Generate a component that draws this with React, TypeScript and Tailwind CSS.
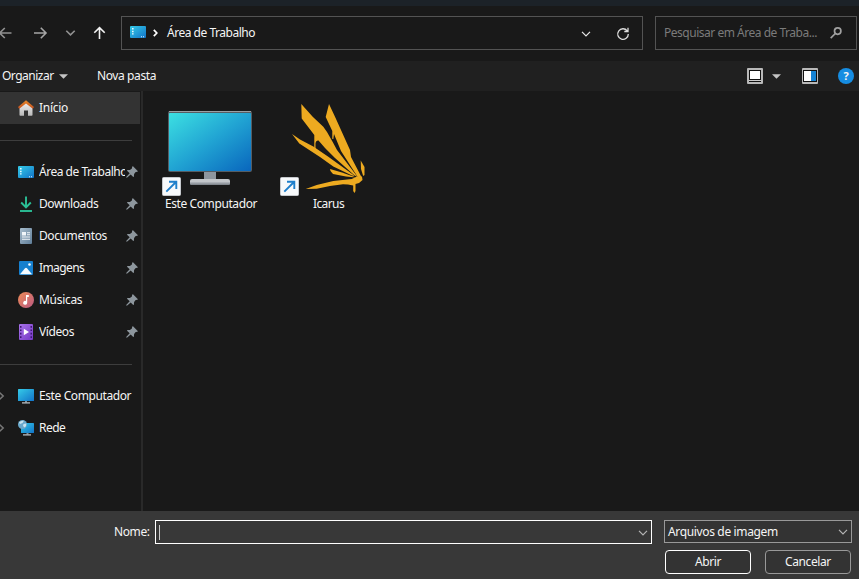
import React from "react";

type SvgProps = { className?: string };

function DesktopIcon({ className = "" }: SvgProps) {
  return (
    <svg width="16" height="16" viewBox="0 0 16 16" className={className}>
      <defs>
        <linearGradient id="desk" x1="0" y1="0" x2="1" y2="1">
          <stop offset="0" stopColor="#35cbe8" />
          <stop offset="1" stopColor="#1273c8" />
        </linearGradient>
      </defs>
      <rect x="0" y="2" width="16" height="12" rx="1" fill="url(#desk)" />
      <path d="M2 4h1.6v1.5H2zM2 6.7h1.6v1.5H2zM2 9.2h1.6v1.4H2z" fill="#e8fbff" />
      <path d="M11 12.3h1v1h-1zM13 12.3h1v1h-1z" fill="#d8f0ff" />
    </svg>
  );
}

function HomeIcon() {
  return (
    <svg width="16" height="16" viewBox="0 0 16 16">
      <defs>
        <linearGradient id="wall" x1="0" y1="0" x2="0" y2="1">
          <stop offset="0" stopColor="#f2f2f2" />
          <stop offset="1" stopColor="#b9b9b9" />
        </linearGradient>
        <linearGradient id="roof" x1="0" y1="0" x2="0" y2="1">
          <stop offset="0" stopColor="#e98a2c" />
          <stop offset="1" stopColor="#c3501f" />
        </linearGradient>
      </defs>
      <path d="M1.500 7 8 2l6.500 5v8q0 .8-.8.800H10V10.500H6v5.300H2.300q-.8 0-.8-.8z" fill="url(#wall)" />
      <path d="M8 .2 16 6.900 14.800 8.700 8 3.400 1.200 8.700 0 6.900z" fill="url(#roof)" />
    </svg>
  );
}

function DownloadIcon() {
  return (
    <svg width="16" height="16" viewBox="0 0 16 16" fill="none" stroke="#2bbf96" strokeWidth="1.900">
      <path d="M8 .5v11M3.200 6.500 8 11.300l4.800-4.800" />
      <path d="M2 15h12" strokeWidth="1.900" />
    </svg>
  );
}

function DocumentIcon() {
  return (
    <svg width="16" height="16" viewBox="0 0 16 16">
      <defs>
        <linearGradient id="doc" x1="0" y1="0" x2="1" y2="1">
          <stop offset="0" stopColor="#a8bdcd" />
          <stop offset="1" stopColor="#5f7d98" />
        </linearGradient>
      </defs>
      <rect x="2" y="0" width="12" height="16" rx="1" fill="url(#doc)" />
      <path d="M4 4h4v3.500H4zM9 4.200h3v1H9zM9 6.300h3v1H9zM4 8.600h8v1H4zM4 10.700h8v1H4z" fill="#f1f6fa" />
    </svg>
  );
}

function ImageIcon() {
  return (
    <svg width="16" height="16" viewBox="0 0 16 16">
      <rect x="1" y="1" width="14" height="14" rx="1" fill="#1680cf" />
      <path d="M2 14.300 7 8.200q1-1 2 0l5 6.100z" fill="#f5fbff" />
      <circle cx="11.500" cy="4.500" r="1.300" fill="#f5fbff" />
    </svg>
  );
}

function MusicIcon() {
  return (
    <svg width="16" height="16" viewBox="0 0 16 16">
      <defs>
        <linearGradient id="music" x1="0" y1="0" x2="1" y2="1">
          <stop offset="0" stopColor="#ef8c56" />
          <stop offset="1" stopColor="#b95882" />
        </linearGradient>
      </defs>
      <circle cx="8" cy="8" r="8" fill="url(#music)" />
      <path d="M8 3h2.800v1.900H9.200v5.800a2 2 0 1 1-1.200-1.800z" fill="#fff" />
    </svg>
  );
}

function VideoIcon() {
  return (
    <svg width="16" height="16" viewBox="0 0 16 16">
      <defs>
        <linearGradient id="vid" x1="0" y1="0" x2="1" y2="1">
          <stop offset="0" stopColor="#a873ea" />
          <stop offset="1" stopColor="#7538c4" />
        </linearGradient>
      </defs>
      <rect x="1" y="0" width="14" height="16" rx="1" fill="url(#vid)" />
      <path
        d="M2 2h1.500v1.700H2zM2 5.400h1.500v1.700H2zM2 8.800h1.500v1.700H2zM2 12.200h1.500v1.700H2zM12.500 2H14v1.700h-1.500zM12.500 5.400H14v1.700h-1.500zM12.500 8.800H14v1.700h-1.500zM12.500 12.200H14v1.700h-1.500z"
        fill="#3e1772"
      />
      <path d="M5.800 4.700v6.600L11 8z" fill="#fff" />
    </svg>
  );
}

function MonitorIcon() {
  return (
    <svg width="16" height="16" viewBox="0 0 16 16">
      <rect x="0" y="1" width="16" height="12" rx=".6" fill="url(#desk)" />
      <path d="M7 13h2v1.500H7z" fill="#7f909c" />
      <path d="M4 14.300h8v1.200H4z" fill="#c4ccd2" />
    </svg>
  );
}

function NetworkIcon() {
  return (
    <svg width="16" height="16" viewBox="0 0 16 16">
      <rect x="3" y="3" width="13" height="10" rx=".6" fill="url(#desk)" />
      <path d="M8.500 13h2v1.500h-2z" fill="#7f909c" />
      <path d="M5 14.300h8v1.200H5z" fill="#c4ccd2" />
      <circle cx="4.500" cy="4.500" r="4.500" fill="#6aa9cc" />
      <path d="M1 2.500Q3 .2 6 .8L4.500 3 2 4zM5.500 4l2.800-.5q.3 2.500-1.600 4L5 6z" fill="#c9e4ef" />
    </svg>
  );
}

function PinIcon() {
  return (
    <svg width="12" height="12" viewBox="0 0 12 12" fill="#8d969d">
      <path d="M7 .3 11.700 5q.3.600-.3.800l-1.700.3-1.600 2-.2 2.400q-.3.700-.9.200L4.700 8.400 1.200 11.600.3 11.800.4 10.800 3.700 7.300 1.300 5q-.5-.7.100-.9l2.500-.2L5.900 2.400 6.200.7q.2-.7.800-.4z" />
    </svg>
  );
}

function ChevronDown({ className = "", color = "#e8e8e8", w = 10 }: SvgProps & { color?: string; w?: number }) {
  return (
    <svg width={w} height="6" viewBox="0 0 10 6" fill="none" stroke={color} strokeWidth="1.200" className={className}>
      <path d="M1 .8 5 4.800 9 .8" />
    </svg>
  );
}

function Shortcut() {
  return (
    <svg width="19" height="19" viewBox="0 0 19 19" className="absolute bottom-0 left-0">
      <rect x=".5" y=".5" width="18" height="18" rx="1" fill="#f7f9fb" stroke="#c6c9cd" />
      <path d="M4.300 14.700 14 5M7 4.800h7.300V12" fill="none" stroke="#1f7fcb" strokeWidth="1.900" />
    </svg>
  );
}

function ComputerArt() {
  return (
    <svg width="96" height="96" viewBox="0 0 96 96">
      <defs>
        <linearGradient id="screen" x1="0" y1="0" x2="1" y2="1">
          <stop offset="0" stopColor="#3ce0e2" />
          <stop offset=".5" stopColor="#21a4d3" />
          <stop offset="1" stopColor="#0966bd" />
        </linearGradient>
        <linearGradient id="stand" x1="0" y1="0" x2="0" y2="1">
          <stop offset="0" stopColor="#b5bac0" />
          <stop offset="1" stopColor="#777d84" />
        </linearGradient>
      </defs>
      <rect x="6" y="11" width="84" height="61" rx="2" fill="#565d63" />
      <path d="M7 11.500h82" stroke="#9a9fa3" />
      <rect x="7" y="13" width="82" height="58" rx=".8" fill="url(#screen)" />
      <path d="M42 72h12v9H42z" fill="#8e969e" />
      <path d="M30 79h36q2 0 2 2v1H28v-1q0-2 2-2z" fill="#c2c6ca" />
      <path d="M28 82h40v2q0 1-1 1H29q-1 0-1-1z" fill="url(#stand)" />
    </svg>
  );
}

function IcarusArt() {
  return (
    <svg width="96" height="96" viewBox="0 0 96 96" fill="#edaa20">
      <path d="M21.300 4 32.700 16.700 43.300 26.700 47 32 52.700 42 57 50 78 77.500 73.500 74.500 55 58 45 48 38.500 40.500Q36 40 35.500 43V49L34.300 49V35L21.700 18.500z" />
      <path d="M49 4 55 16.700 70 50 71 57 82 78 79 79 61 51 54 34 53.300 39H52.300V31L45.700 17z" />
      <path d="M12 34 20 39.500 33.300 46.500 48.300 56.700 75 76 72 75.500 53.300 66.500 40 57 19.300 43.500z" />
      <path d="M50 69 62 72.500 76 77.500 66 76.500 53 74 50.500 71z" />
      <path d="M25.700 89 36.700 85 53.300 81 71.700 79 77 76.500 82 76.500 82.500 80 79 83 75.500 84V91L74.500 93 73.200 91V85.500L68 84.500 63 84.200 50 86 36.700 88.700z" />
      <path d="M80.700 60.500 84.500 67V75L83.200 76 81 69z" />
    </svg>
  );
}

type Item = { label: string; icon: React.ReactNode; pin?: boolean; expand?: boolean; spacing: string };

const pinned: Item[] = [
  { label: "Área de Trabalho", icon: <DesktopIcon />, pin: true, spacing: "tracking-[-0.48px]" },
  { label: "Downloads", icon: <DownloadIcon />, pin: true, spacing: "tracking-[-0.4px]" },
  { label: "Documentos", icon: <DocumentIcon />, pin: true, spacing: "tracking-[-0.4px]" },
  { label: "Imagens", icon: <ImageIcon />, pin: true, spacing: "tracking-[-0.6px]" },
  { label: "Músicas", icon: <MusicIcon />, pin: true, spacing: "tracking-[-0.3px]" },
  { label: "Vídeos", icon: <VideoIcon />, pin: true, spacing: "tracking-[-0.4px]" },
];

const places: Item[] = [
  { label: "Este Computador", icon: <MonitorIcon />, expand: true, spacing: "tracking-[-0.4px]" },
  { label: "Rede", icon: <NetworkIcon />, expand: true, spacing: "tracking-[-0.5px]" },
];

function Row({ item }: { item: Item }) {
  return (
    <div className="flex h-8 items-center">
      <div className="w-[18px] shrink-0">
        {item.expand && (
          <svg width="5" height="10" viewBox="0 0 5 10" fill="none" stroke="#777" strokeWidth="1.500">
            <path d="M-1 1 3.200 5-1 9" />
          </svg>
        )}
      </div>
      <div className="w-[21px] shrink-0">{item.icon}</div>
      <div className={`shrink-0 overflow-hidden whitespace-nowrap ${item.pin ? "w-[86px]" : "w-[97px]"} ${item.spacing}`}>
        {item.label}
      </div>
      {item.pin && <div className="ml-px shrink-0"><PinIcon /></div>}
    </div>
  );
}

function Separator() {
  return (
    <div className="h-8 pt-4">
      <div className="h-px w-[132px] bg-[#3d3d3d]" />
    </div>
  );
}

export default function App() {
  return (
    <div className="flex h-[579px] w-[859px] flex-col overflow-hidden bg-[#191919] font-['Noto_Sans','Open_Sans',sans-serif] text-[12px] leading-4 text-[#f5f5f5]">
      <div className="h-1.5 shrink-0 bg-[#1c2228]" />

      <header className="flex h-[55px] shrink-0 items-start pt-2.5">
        <svg width="121" height="20" viewBox="0 0 121 20" fill="none" strokeWidth="1.600" className="mt-[7px] shrink-0">
          <path d="M11.500 10H0M4.800 5-.3 10l5.100 5" stroke="#919191" />
          <path d="M34 10h12M40.800 4.800 46 10l-5.200 5.200" stroke="#a5a5a5" />
          <path d="M66.300 7.700 70.500 11.900l4.200-4.200" stroke="#919191" />
          <path d="M99.500 16v-11M94.300 9.800l5.200-5.200 5.200 5.200" stroke="#f3f3f3" />
        </svg>
        <div className="flex h-[34px] w-[522px] shrink-0 items-center border border-[#535353] pl-2">
          <DesktopIcon className="-mt-0.5" />
          <svg width="5" height="8" viewBox="0 0 5 8" fill="none" stroke="#fff" strokeWidth="1.700" className="ml-[7px]">
            <path d="m.8.800 3 3.200-3 3.200" />
          </svg>
          <span className="ml-[9px] whitespace-nowrap tracking-[-0.48px]">Área de Trabalho</span>
          <ChevronDown className="mt-0.5 ml-auto" />
          <svg width="14" height="14" viewBox="0 0 14 14" fill="none" stroke="#ddd" strokeWidth="1.300" className="mt-0.5 mr-3 ml-[25px]">
            <path d="M11.200 3.800A5.300 5.300 0 1 0 12.300 7M12 .8v3.700H8.300" />
          </svg>
        </div>
        <div className="ml-3 flex h-[34px] w-[202px] shrink-0 items-center border border-[#535353] pl-2 text-[#7b7b7b]">
          <span className="whitespace-nowrap tracking-[-0.48px]">Pesquisar em Área de Traba...</span>
          <svg width="12" height="12" viewBox="0 0 12 12" fill="none" stroke="#a0a0a0" strokeWidth="1.700" className="mr-3.5 ml-auto">
            <circle cx="7.700" cy="4.100" r="3.200" />
            <path d="M5.300 6.500.7 11.200" />
          </svg>
        </div>
      </header>

      <div className="flex h-[30px] shrink-0 items-center bg-[#202020] pl-0.5">
        <div className="flex w-[95px] items-center">
          <span className="tracking-[-0.5px]">Organizar</span>
          <svg width="9" height="5" viewBox="0 0 9 5" className="ml-[5px]"><path d="M0 .2h9L4.500 4.800z" fill="#c4c4c4" /></svg>
        </div>
        <span className="tracking-[-0.4px]">Nova pasta</span>
        <svg width="16" height="16" viewBox="0 0 16 16" className="ml-auto">
          <rect width="16" height="16" rx="1" fill="#b9b9b9" />
          <path d="M2 2h12v12H2z" fill="#111" />
          <path d="M3 3h10v8H3z" fill="#fff" />
          <path d="M2 12h12v1H2z" fill="#ccc" />
        </svg>
        <svg width="9" height="5" viewBox="0 0 9 5" className="ml-[9px]"><path d="M0 .2h9L4.500 4.800z" fill="#c4c4c4" /></svg>
        <svg width="16" height="16" viewBox="0 0 16 16" className="ml-[21px]">
          <rect width="16" height="16" rx="1" fill="#b9b9b9" />
          <path d="M1 2h14v12H1z" fill="#111" />
          <path d="M2 3h7v10H2z" fill="#fff" />
          <path d="M9 3h5v10H9z" fill="#1683d4" />
        </svg>
        <div className="mr-[5px] ml-5 flex size-4 items-center justify-center rounded-full bg-[#168de2] text-[11px] font-bold">?</div>
      </div>

      <div className="flex h-[420px] shrink-0">
        <aside className="w-[143px] shrink-0 border-r-2 border-[#292929] pt-px">
          <div className="flex h-8 w-[140px] items-center bg-[#333] pl-[18px]">
            <HomeIcon />
            <span className="ml-[5px] tracking-[-0.3px]">Início</span>
          </div>
          <Separator />
          {pinned.map((item) => <Row key={item.label} item={item} />)}
          <Separator />
          {places.map((item) => <Row key={item.label} item={item} />)}
        </aside>
        <main className="flex flex-1 items-start pt-[9px] pl-[19px]">
          <div className="flex w-24 flex-col items-center">
            <div className="relative h-24"><ComputerArt /><Shortcut /></div>
            <span className="ml-0.5 whitespace-nowrap tracking-[-0.4px]">Este Computador</span>
          </div>
          <div className="ml-[22px] flex w-24 flex-col items-center">
            <div className="relative h-24"><IcarusArt /><Shortcut /></div>
            <span className="ml-px tracking-[-0.6px]">Icarus</span>
          </div>
        </main>
      </div>

      <footer className="h-[68px] shrink-0 bg-[#383838] pt-[9px]">
        <div className="flex items-start">
          <span className="mt-1 w-[155px] shrink-0 pl-[114px] tracking-[-0.4px]">Nome:</span>
          <div className="flex h-6 w-[497px] shrink-0 items-center border border-white pr-[3px] pl-[3px]">
            <div className="h-[15px] w-px bg-[#c9c9c9]" />
            <ChevronDown className="mt-0.5 ml-auto" color="#b5b5b5" w={10} />
          </div>
          <div className="ml-3 flex h-[23px] w-[188px] shrink-0 items-center border border-[#999] bg-[#333] pr-[3px] pl-[3px]">
            <span className="tracking-[-0.35px]">Arquivos de imagem</span>
            <ChevronDown className="mt-px ml-auto" color="#b5b5b5" w={10} />
          </div>
        </div>
        <div className="mt-[6px] flex justify-end gap-3.5 pr-2">
          <button className="h-6 w-[86px] rounded border border-white bg-[#333] tracking-[-0.4px]">Abrir</button>
          <button className="h-6 w-[86px] rounded border border-[#999] bg-[#333] tracking-[-0.4px]">Cancelar</button>
        </div>
      </footer>
    </div>
  );
}
